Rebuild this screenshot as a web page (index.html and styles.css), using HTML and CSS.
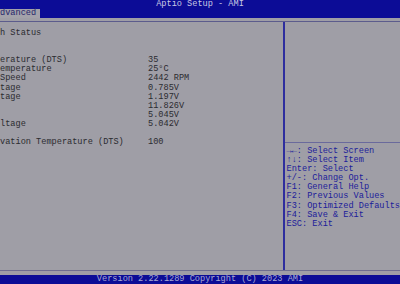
FILE: index.html
```html
<!DOCTYPE html>
<html lang="en">
<head>
  <meta charset="UTF-8" />
  <title>Aptio Setup - AMI</title>
  <link rel="stylesheet" href="styles.css">
</head>
<body>
  <div class="topbar">
    <div class="title">Aptio Setup - AMI</div>
    <div class="tabs"><span class="tab">dvanced</span></div>
  </div>

  <div class="frame">
    <div class="main">
      <!-- Settings list -->
      <div class="left">
        <div class="row"><span>h Status</span></div>
        <div class="row blank"></div>
        <div class="row blank"></div>
        <div class="row"><span>erature (DTS)</span><span>35</span></div>
        <div class="row"><span>emperature</span><span>25°C</span></div>
        <div class="row"><span>Speed</span><span>2442 RPM</span></div>
        <div class="row"><span>tage</span><span>0.785V</span></div>
        <div class="row"><span>tage</span><span>1.197V</span></div>
        <div class="row"><span></span><span>11.826V</span></div>
        <div class="row"><span></span><span>5.045V</span></div>
        <div class="row"><span>ltage</span><span>5.042V</span></div>
        <div class="row blank"></div>
        <div class="row"><span>vation Temperature (DTS)</span><span>100</span></div>
      </div>

      <div class="divider"></div>

      <!-- Help panel -->
      <div class="right">
        <div class="desc"></div>
        <div class="help">
          <div>&rarr;&larr;: Select Screen</div>
          <div>&uarr;&darr;: Select Item</div>
          <div>Enter: Select</div>
          <div>+/-: Change Opt.</div>
          <div>F1: General Help</div>
          <div>F2: Previous Values</div>
          <div>F3: Optimized Defaults</div>
          <div>F4: Save &amp; Exit</div>
          <div>ESC: Exit</div>
        </div>
      </div>
    </div>
  </div>

  <div class="footer">Version 2.22.1289 Copyright (C) 2023 AMI</div>
</body>
</html>
```

FILE: styles.css
```css
body {
  margin: 0;
  padding: 0;
  width: 400px;
  height: 284px;
  overflow: hidden;
  background: #9f9ea6;
  font-family: 'Liberation Mono', 'DejaVu Sans Mono', monospace;
  font-size: 8.6px;
  line-height: 9.1px;
  color: #2b2b30;
}
.topbar {
  background: #0c0c96;
  height: 18px;
}
.title {
  height: 9px;
  line-height: 9px;
  text-align: center;
  color: #c8c8e4;
}
.tabs {
  height: 9px;
  line-height: 9px;
}
.tab {
  display: inline-block;
  width: 40px;
  height: 9px;
  background: #a3a2aa;
  color: #25256a;
}
.frame {
  padding-top: 3px;
}
.main {
  display: flex;
  height: 248px;
  border-top: 1px solid #5c5c8c;
  border-bottom: 1px solid #6e6e90;
}
.left {
  width: 284px;
  padding-top: 7px;
}
.row {
  display: grid;
  grid-template-columns: 148px 1fr;
  height: 9.1px;
  white-space: nowrap;
}
.divider {
  width: 2px;
  background: #2e2e9e;
}
.right {
  flex: 1;
  display: flex;
  flex-direction: column;
}
.desc {
  height: 120px;
  border-bottom: 1px solid #6a6a9c;
}
.help {
  padding: 4px 0 0 2px;
  color: #1c1c9a;
  white-space: nowrap;
}
.footer {
  margin-top: 4px;
  background: #0c0c96;
  height: 9px;
  line-height: 9px;
  text-align: center;
  color: #a8a8d4;
}
```
